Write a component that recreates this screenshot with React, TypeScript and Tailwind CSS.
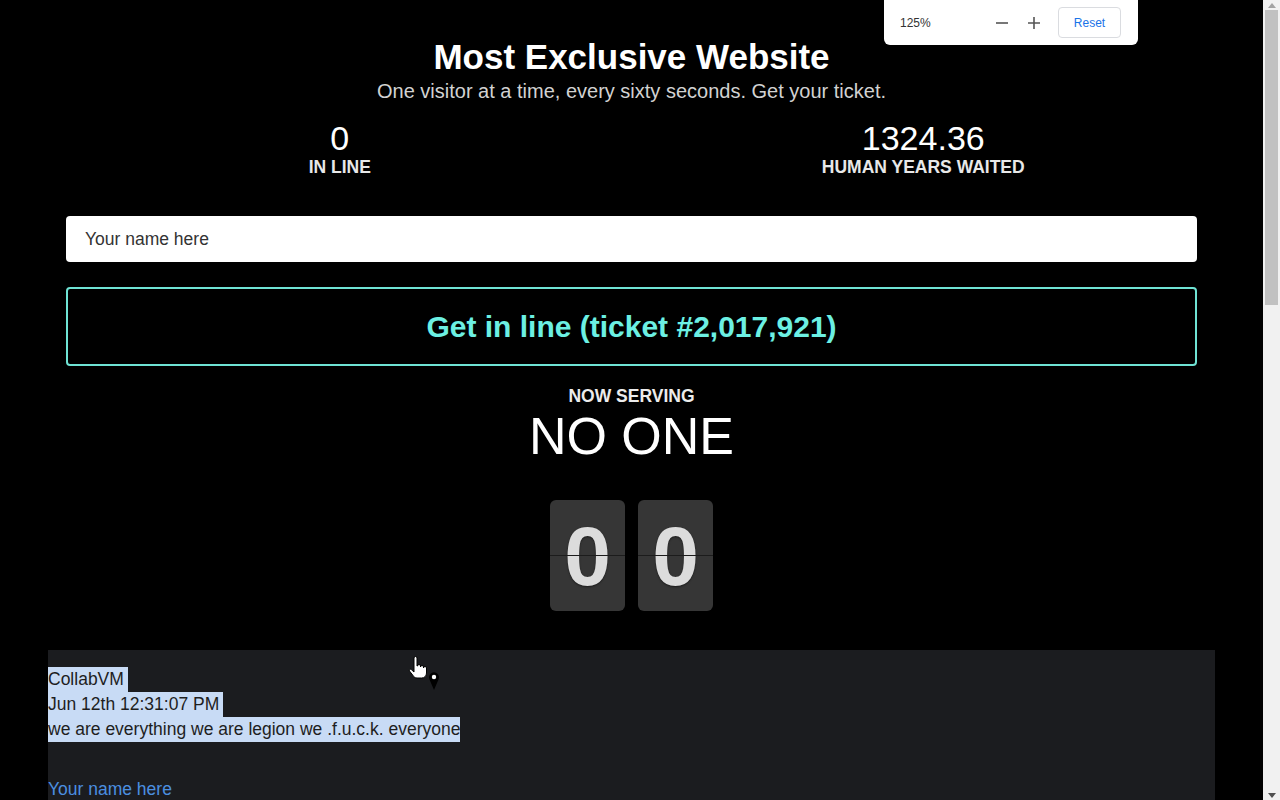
import { useState } from 'react';

const FlipDigit = ({ value }: { value: string }) => {
	return (
		<div className="relative flex h-[111px] w-[75px] items-center justify-center rounded-[6px] bg-[#363636] shadow-[0_2px_4px_rgba(0,0,0,0.6)]">
			<span className="text-[84px] font-bold leading-none text-[#dcdcdc] [text-shadow:0_1px_2px_rgba(0,0,0,0.5)]">{value}</span>
			<div className="absolute left-0 right-0 top-[55px] h-px bg-[#1c1c1c]" />
		</div>
	);
};

const App = () => {
	const [name, setName] = useState('');
	const ticket = 2017921;

	return (
		<div className="flex h-[800px] w-[1280px] overflow-hidden bg-black font-['Liberation_Sans',Arial,sans-serif]">
			<main className="relative flex flex-1 flex-col items-center">
				{/* zoom popup */}
				<div className="absolute left-[884px] top-0 flex h-[45px] w-[254px] items-center rounded-b-[6px] bg-white pl-4 pr-4 shadow-[0_1px_4px_rgba(0,0,0,0.3)]">
					<span className="w-[86px] text-[12px] text-[#333]">125%</span>
					<span className="flex w-[32px] justify-center text-[#555]">
						<svg width="14" height="14" viewBox="0 0 14 14"><path d="M1 7h12" stroke="currentColor" strokeWidth="1.6" /></svg>
					</span>
					<span className="flex w-[32px] justify-center text-[#555]">
						<svg width="14" height="14" viewBox="0 0 14 14"><path d="M1 7h12M7 1v12" stroke="currentColor" strokeWidth="1.6" /></svg>
					</span>
					<button className="ml-[8px] h-[31px] w-[63px] rounded-[4px] border border-[#dadce0] text-[12px] text-[#1a73e8]">Reset</button>
				</div>

				<div className="flex w-[1167px] flex-1 flex-col">
					<h1 className="pt-[37px] text-center text-[35px] font-bold leading-[39px] text-white">Most Exclusive Website</h1>
					<p className="mt-[4px] text-center text-[20px] leading-[23px] text-[#d2d2d2]">One visitor at a time, every sixty seconds. Get your ticket.</p>

					<div className="mt-[16px] grid grid-cols-2 text-center">
						<div>
							<div className="text-[34px] leading-[38px] text-white">0</div>
							<div className="text-[17.5px] font-bold leading-[21px] text-[#e8e8e8]">IN LINE</div>
						</div>
						<div>
							<div className="text-[34px] leading-[38px] text-white">1324.36</div>
							<div className="text-[17.5px] font-bold leading-[21px] text-[#e8e8e8]">HUMAN YEARS WAITED</div>
						</div>
					</div>

					<div className="mx-[18px] mt-[38px] flex flex-col gap-[25px]">
						<input
							value={name}
							onChange={(e) => setName(e.target.value)}
							placeholder="Your name here"
							className="h-[46px] w-full rounded-[4px] bg-white px-[19px] text-[17.5px] text-[#333] outline-none placeholder:text-[#333]"
						/>
						<button className="h-[79px] w-full rounded-[4px] border-2 border-[#6fe3d4] bg-black text-[30px] font-bold text-[#6cf0e3]">
							Get in line (ticket #{ticket.toLocaleString('en-US')})
						</button>
					</div>

					<div className="mt-[20px] text-center text-[17.5px] font-bold leading-[21px] text-[#ececec]">NOW SERVING</div>
					<div className="text-center text-[52px] leading-[58px] text-white">NO ONE</div>

					<div className="mt-[35px] flex justify-center gap-[13px]">
						<FlipDigit value="0" />
						<FlipDigit value="0" />
					</div>

					<section className="relative mt-[39px] flex-1 bg-[#1b1c1f] pt-[17px] text-[17.5px] leading-[25px]">
						<div className="w-fit bg-[#c8dbf5] pr-[4px] text-[#1e1e1e]">CollabVM</div>
						<div className="w-fit bg-[#c8dbf5] pr-[4px] text-[#1e1e1e]">Jun 12th 12:31:07 PM</div>
						<div className="w-fit bg-[#c8dbf5] text-[#1e1e1e]">we are everything we are legion we .f.u.c.k. everyone</div>
						<div className="mt-[35px] text-[#4b8fe0]">Your name here</div>

						{/* mouse pointer + pin marker */}
						<svg className="absolute left-[360px] top-[6px]" width="20" height="24" viewBox="0 0 20 24">
							<path d="M6 2a1.5 1.5 0 0 1 3 0V10h.5a1.5 1.5 0 0 1 3 0V11a1.5 1.5 0 0 1 3 0V12a1.5 1.5 0 0 1 3 0V17c0 3-2 5-5 5H9c-2 0-3-1-4-2.5L1.5 15c-.8-1.2.8-2.4 1.8-1.4L6 16Z" fill="#fff" stroke="#000" strokeWidth="1" />
						</svg>
						<svg className="absolute left-[380px] top-[21px]" width="12" height="20" viewBox="0 0 12 20">
							<path d="M6 19L1.5 8.5A5 5 0 1 1 10.5 8.5z" fill="#000" />
							<circle cx="6" cy="6" r="2.2" fill="#fff" />
						</svg>
					</section>
				</div>
			</main>

			{/* scrollbar */}
			<div className="flex w-[17px] flex-col items-center bg-[#f1f1f1]">
				<div className="flex h-[10px] items-center justify-center">
					<svg width="8" height="5" viewBox="0 0 8 5"><path d="M0 5L4 0l4 5z" fill="#a3a3a3" /></svg>
				</div>
				<div className="h-[295px] w-[13px] bg-[#c1c1c1]" />
				<div className="flex-1" />
				<div className="flex h-[10px] items-center justify-center">
					<svg width="8" height="5" viewBox="0 0 8 5"><path d="M0 0h8L4 5z" fill="#505050" /></svg>
				</div>
			</div>
		</div>
	);
};

export default App;
